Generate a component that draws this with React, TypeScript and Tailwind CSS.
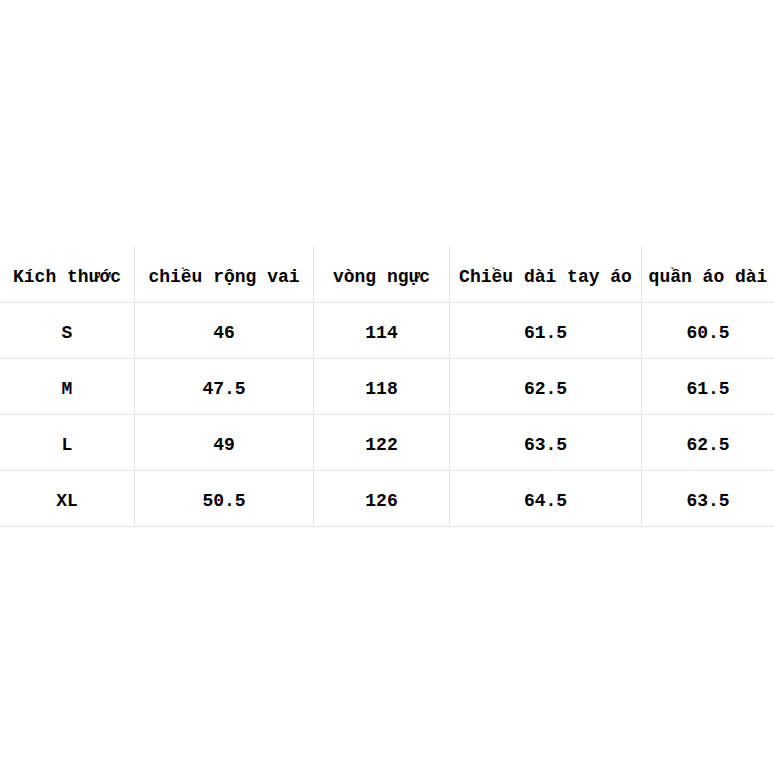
import React from "react";

const headers = ["Kích thước", "chiều rộng vai", "vòng ngực", "Chiều dài tay áo", "quần áo dài"];
const rows = [
  ["S", "46", "114", "61.5", "60.5"],
  ["M", "47.5", "118", "62.5", "61.5"],
  ["L", "49", "122", "63.5", "62.5"],
  ["XL", "50.5", "126", "64.5", "63.5"],
];

export default function App() {
  const all = [headers, ...rows];
  return (
    <div className="w-[774px] h-[774px] bg-white flex flex-col justify-start pt-[247px]">
      <div
        className="grid grid-cols-[134px_179px_136px_192px_133px] text-[18px] text-black font-bold"
        style={{ fontFamily: '"Liberation Mono", "Noto Sans CJK SC", monospace' }}
      >
        {all.map((r, ri) =>
          r.map((c, ci) => (
            <div
              key={`${ri}-${ci}`}
              className={`h-[56px] pt-[6px] flex items-center justify-center whitespace-pre border-b border-[#e4e4e4] ${
                ci > 0 ? "border-l" : ""
              }`}
            >
              {c}
            </div>
          ))
        )}
      </div>
    </div>
  );
}
